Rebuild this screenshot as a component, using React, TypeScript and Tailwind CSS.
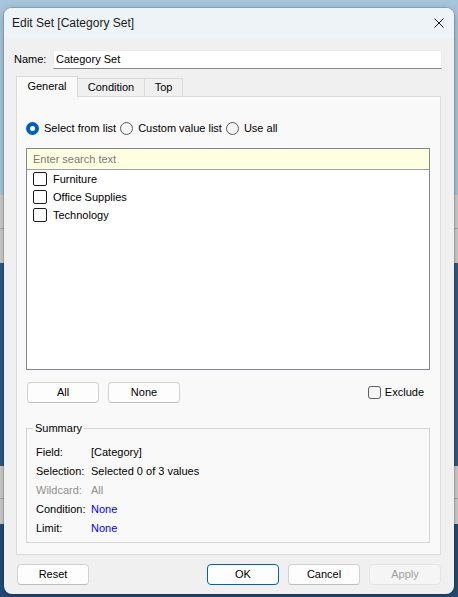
import React from "react";

const font = { fontFamily: '"Liberation Sans", Arial, sans-serif' };

function Radio({ checked }: { checked?: boolean }) {
  return checked ? (
    <span className="w-[13px] h-[13px] rounded-full bg-[#005fb8] flex items-center justify-center shrink-0">
      <span className="w-[5px] h-[5px] rounded-full bg-white" />
    </span>
  ) : (
    <span className="block w-[13px] h-[13px] rounded-full border border-[#595959] bg-[#f5f5f5] shrink-0" />
  );
}

function Btn({
  children,
  className = "",
  primary,
  disabled,
}: {
  children: React.ReactNode;
  className?: string;
  primary?: boolean;
  disabled?: boolean;
}) {
  const base =
    "w-[72px] h-[21px] rounded-[4px] flex items-center justify-center text-[11px] leading-none ";
  const style = disabled
    ? "bg-[#f5f5f5] border border-[#e5e5e5] text-[#a0a0a0]"
    : primary
    ? "bg-[#fdfdfd] border border-[#005fb8] text-black"
    : "bg-[#fdfdfd] border border-[#d1d1d1] border-b-[#bdbdbd] text-black";
  return <div className={base + style + " " + className}>{children}</div>;
}

function ListItem({ label }: { label: string }) {
  return (
    <div className="h-[18px] flex items-center pl-[6px] gap-[6px]">
      <span className="w-[14px] h-[14px] border border-[#1a1a1a] rounded-[2px] bg-white shrink-0" />
      <span>{label}</span>
    </div>
  );
}

function SummaryRow({
  label,
  value,
  labelCls = "text-black",
  valueCls = "text-black",
}: {
  label: string;
  value: string;
  labelCls?: string;
  valueCls?: string;
}) {
  return (
    <div className="h-[19px] flex items-center pl-[3px]">
      <span className={"w-[55px] " + labelCls}>{label}</span>
      <span className={valueCls}>{value}</span>
    </div>
  );
}

export default function App() {
  return (
    <div
      className="w-[458px] h-[597px] overflow-hidden pt-[8px] pl-[4px] bg-[linear-gradient(to_bottom,#a7c5db_195px,#cdcdcd_195px,#cdcdcd_228px,#a9a9a9_228px,#a9a9a9_229px,#cdcdcd_229px,#cdcdcd_263px,#2f5a85_263px,#2f5a85_466px,#cdcdcd_466px,#cdcdcd_498px,#a9a9a9_498px,#a9a9a9_499px,#cdcdcd_499px,#cdcdcd_524px,#234c77_524px)]"
      style={font}
    >
      <div className="w-[450px] h-[586px] rounded-[8px] overflow-hidden bg-[#f0f0f0] shadow-[0_0_0_1px_rgba(0,0,0,0.12),0_2px_8px_rgba(0,0,0,0.25)] flex flex-col text-[11px] text-black">
        {/* Title bar */}
        <div className="h-[30px] bg-[#eef3f8] flex items-center pl-[8px] pr-[10px]">
          <span className="text-[12px] text-[#1a1a1a]">Edit Set [Category Set]</span>
          <span className="ml-auto w-[10px] h-[10px] flex">
            <svg width="10" height="10" viewBox="0 0 10 10">
              <path d="M0.5 0.5 L9.5 9.5 M9.5 0.5 L0.5 9.5" stroke="#1a1a1a" strokeWidth="1" />
            </svg>
          </span>
        </div>

        {/* Body */}
        <div className="flex flex-col pt-[12px]">
          {/* Name row */}
          <div className="flex items-center pl-[10px] pr-[12px] h-[19px]">
            <span className="w-[39px]">Name:</span>
            <div className="flex-1 h-[19px] bg-white border-b border-b-[#868686] border-t border-t-[#ececec] border-x border-x-[#ececec] flex items-center pl-[2px]">
              Category Set
            </div>
          </div>

          {/* Tabs */}
          <div className="mt-[7px] pl-[12px] flex items-end h-[20px] relative z-10">
            <div className="w-[62px] h-[21px] -mb-[1px] bg-[#f9f9f9] border-l border-t border-r border-[#d9d9d9] flex items-center justify-center pb-[2px]">
              General
            </div>
            <div className="w-[67px] h-[18px] bg-[#f0f0f0] border-t border-r border-[#d9d9d9] flex items-center justify-center">
              Condition
            </div>
            <div className="w-[38px] h-[18px] bg-[#f0f0f0] border-t border-r border-[#d9d9d9] flex items-center justify-center">
              Top
            </div>
          </div>

          {/* Panel */}
          <div className="ml-[12px] w-[425px] h-[459px] bg-[#f9f9f9] border border-[#dcdcdc] flex flex-col pt-[23px] pl-[9px] pr-[10px]">
            {/* Radio row */}
            <div className="h-[16px] flex items-center">
              <Radio checked />
              <span className="ml-[5px]">Select from list</span>
              <span className="ml-[4px] flex"><Radio /></span>
              <span className="ml-[5px]">Custom value list</span>
              <span className="ml-[4px] flex"><Radio /></span>
              <span className="ml-[5px]">Use all</span>
            </div>

            {/* List box */}
            <div className="mt-[12px] h-[222px] border border-[#828790] bg-white flex flex-col">
              <div className="h-[21px] bg-[#ffffe1] border-b border-[#a0a0a0] flex items-center pl-[6px] text-[#7a7a7a]">
                Enter search text
              </div>
              <ListItem label="Furniture" />
              <ListItem label="Office Supplies" />
              <ListItem label="Technology" />
            </div>

            {/* Buttons row */}
            <div className="mt-[12px] flex items-center">
              <Btn className="ml-[1px]">All</Btn>
              <Btn className="ml-[9px]">None</Btn>
              <div className="ml-auto mr-[6px] flex items-center gap-[4px]">
                <span className="w-[13px] h-[13px] rounded-[3px] border border-[#5f5f5f] bg-[#f6f6f6]" />
                <span>Exclude</span>
              </div>
            </div>

            {/* Summary */}
            <fieldset className="mt-[19px] border border-[#d5d5d5] pl-[6px] pt-[8px] pb-[4px]">
              <legend className="px-[2px] leading-[13px]">Summary</legend>
              <SummaryRow label="Field:" value="[Category]" />
              <SummaryRow label="Selection:" value="Selected 0 of 3 values" />
              <SummaryRow label="Wildcard:" value="All" labelCls="text-[#8f8f8f]" valueCls="text-[#8f8f8f]" />
              <SummaryRow label="Condition:" value="None" valueCls="text-[#0000ff]" />
              <SummaryRow label="Limit:" value="None" valueCls="text-[#0000ff]" />
            </fieldset>
          </div>

          {/* Bottom buttons */}
          <div className="mt-[9px] pl-[13px] flex items-center">
            <Btn>Reset</Btn>
            <Btn primary className="ml-[118px]">OK</Btn>
            <Btn className="ml-[9px]">Cancel</Btn>
            <Btn disabled className="ml-[9px]">Apply</Btn>
          </div>
        </div>
      </div>
    </div>
  );
}
